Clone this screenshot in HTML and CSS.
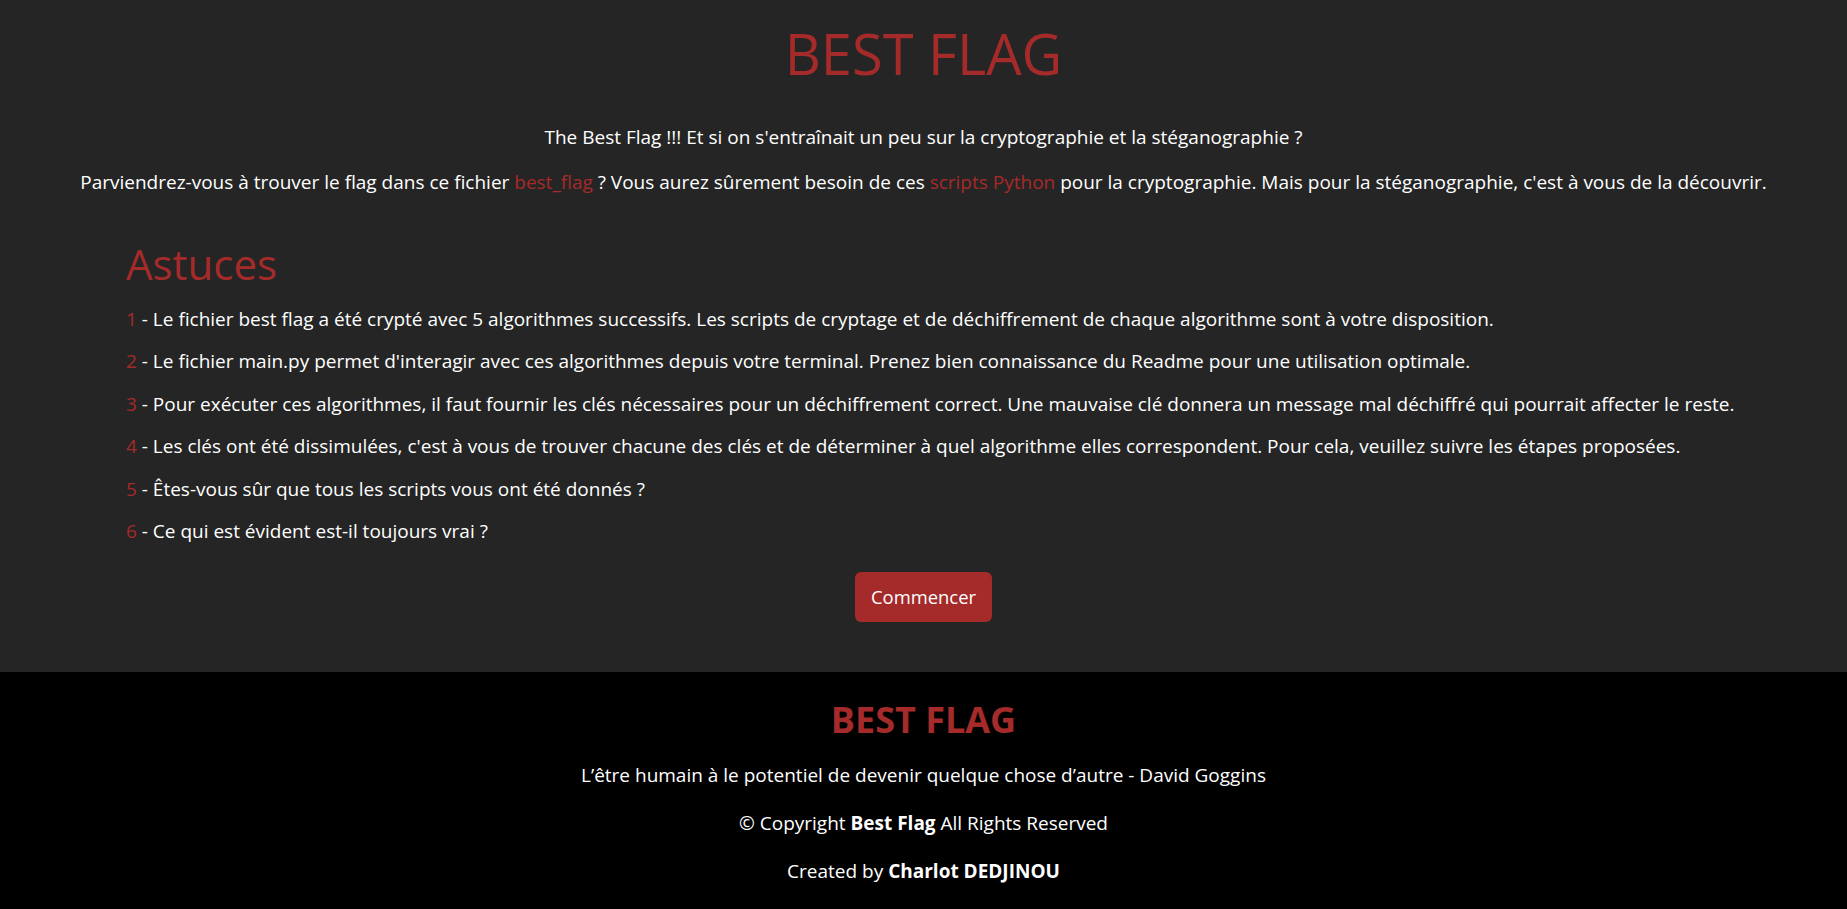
FILE: index.html
```html
<!DOCTYPE html>
<html lang="fr">
<head>
<meta charset="utf-8">
<title>Best Flag</title>
<link rel="stylesheet" href="styles.css">
</head>
<body>
<header class="hero">
  <h1 class="hero-title">BEST FLAG</h1>
  <p class="intro intro-first">The Best Flag !!! Et si on s'entraînait un peu sur la cryptographie et la stéganographie ?</p>
  <p class="intro">Parviendrez-vous à trouver le flag dans ce fichier <a class="link" href="#">best_flag</a> ? Vous aurez sûrement besoin de ces <a class="link" href="#">scripts Python</a> pour la cryptographie. Mais pour la stéganographie, c'est à vous de la découvrir.</p>
  <section class="tips">
    <h2 class="tips-title">Astuces</h2>
    <p class="tip"><span class="num">1</span> - Le fichier best flag a été crypté avec 5 algorithmes successifs. Les scripts de cryptage et de déchiffrement de chaque algorithme sont à votre disposition.</p>
    <p class="tip"><span class="num">2</span> - Le fichier main.py permet d'interagir avec ces algorithmes depuis votre terminal. Prenez bien connaissance du Readme pour une utilisation optimale.</p>
    <p class="tip"><span class="num">3</span> - Pour exécuter ces algorithmes, il faut fournir les clés nécessaires pour un déchiffrement correct. Une mauvaise clé donnera un message mal déchiffré qui pourrait affecter le reste.</p>
    <p class="tip"><span class="num">4</span> - Les clés ont été dissimulées, c'est à vous de trouver chacune des clés et de déterminer à quel algorithme elles correspondent. Pour cela, veuillez suivre les étapes proposées.</p>
    <p class="tip"><span class="num">5</span> - Êtes-vous sûr que tous les scripts vous ont été donnés ?</p>
    <p class="tip"><span class="num">6</span> - Ce qui est évident est-il toujours vrai ?</p>
  </section>
  <div class="actions">
    <button class="btn" type="button">Commencer</button>
  </div>
</header>
<footer class="footer">
  <h2 class="footer-title">BEST FLAG</h2>
  <p class="footer-line">L’être humain à le potentiel de devenir quelque chose d’autre - David Goggins</p>
  <p class="footer-line">© Copyright <strong>Best Flag</strong> All Rights Reserved</p>
  <p class="footer-line">Created by <strong>Charlot DEDJINOU</strong></p>
</footer>
</body>
</html>
```
FILE: styles.css
```css
* { box-sizing: border-box; }

html, body {
  margin: 0;
  padding: 0;
  background: #000;
}

body {
  font-family: "Open Sans", "Noto Sans", sans-serif;
  font-size: 19px;
  color: #fff;
}

.hero {
  background: #252525;
  padding: 20px 0 50px;
  display: flex;
  flex-direction: column;
}

.hero-title {
  margin: 0;
  font-size: 56px;
  line-height: 67px;
  font-weight: 400;
  color: #a52a2a;
  text-align: center;
}

.intro {
  margin: 0 0 19px;
  line-height: 26px;
  text-align: center;
  white-space: nowrap;
}

.intro-first {
  margin-top: 37px;
}

.link {
  color: #a52a2a;
  text-decoration: none;
}

.tips {
  margin-top: 25px;
  padding: 0 40px 0 126px;
}

.tips-title {
  margin: 0 0 17px;
  font-size: 42px;
  line-height: 50px;
  font-weight: 400;
  color: #a52a2a;
}

.tip {
  margin: 0 0 16px;
  line-height: 26.4px;
  white-space: nowrap;
}

.num {
  color: #a52a2a;
}

.actions {
  display: flex;
  justify-content: center;
  margin-top: 12px;
}

.btn {
  font-family: "Open Sans", "Noto Sans", sans-serif;
  font-size: 18.4px;
  line-height: 26px;
  padding: 12px 16px;
  border: 0;
  border-radius: 6px;
  background: #a52a2a;
  color: #fff;
  cursor: pointer;
}

.footer {
  background: #000;
  padding: 26px 0 23px;
  text-align: center;
}

.footer-title {
  margin: 0 0 20px;
  font-size: 36px;
  line-height: 44px;
  font-weight: 700;
  color: #a52a2a;
}

.footer-line {
  margin: 0 0 22px;
  line-height: 26px;
}

.footer-line:last-child {
  margin-bottom: 0;
}

.footer-line strong {
  font-weight: 700;
}
```
